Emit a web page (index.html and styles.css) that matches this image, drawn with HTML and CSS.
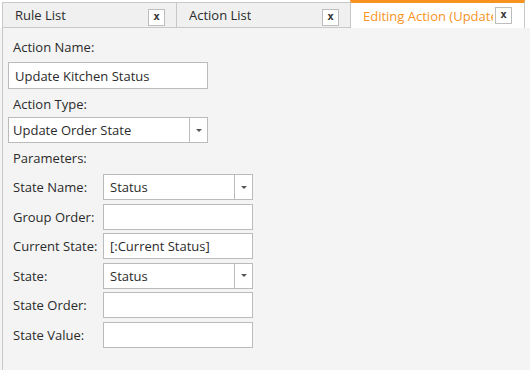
FILE: index.html
```html
<!DOCTYPE html>
<html>
<head>
<meta charset="utf-8">
<link rel="stylesheet" href="styles.css">
</head>
<body>
<div class="tabs">
  <div class="tab">
    <span class="tab-title">Rule List</span>
    <span class="close">x</span>
  </div>
  <div class="tab">
    <span class="tab-title">Action List</span>
    <span class="close">x</span>
  </div>
  <div class="tab active">
    <span class="tab-title">Editing Action (Update Kitchen Status)</span>
    <span class="close">x</span>
  </div>
</div>
<div class="panel">
  <div class="label top">Action Name:</div>
  <div class="field wide name">Update Kitchen Status</div>
  <div class="label">Action Type:</div>
  <div class="field wide select type"><span class="val">Update Order State</span><span class="drop"><i></i></span></div>
  <div class="label params">Parameters:</div>
  <div class="rows">
    <div class="row"><span class="rlabel">State Name:</span><div class="field small select"><span class="val">Status</span><span class="drop"><i></i></span></div></div>
    <div class="row"><span class="rlabel">Group Order:</span><div class="field small"></div></div>
    <div class="row"><span class="rlabel">Current State:</span><div class="field small">[:Current Status]</div></div>
    <div class="row"><span class="rlabel">State:</span><div class="field small select"><span class="val">Status</span><span class="drop"><i></i></span></div></div>
    <div class="row"><span class="rlabel">State Order:</span><div class="field small"></div></div>
    <div class="row"><span class="rlabel">State Value:</span><div class="field small"></div></div>
  </div>
</div>
</body>
</html>
```
FILE: styles.css
```css
* { box-sizing: border-box; }
html, body { margin: 0; height: 100%; }
body {
  background: #f4f4f4;
  font-family: "Open Sans", "Noto Sans", sans-serif;
  font-size: 13px;
  color: #2b2b2b;
  display: flex;
  flex-direction: column;
}
.tabs {
  display: flex;
  height: 28px;
  padding-left: 2px;
  background: #fff;
}
.tab {
  width: 174px;
  margin-top: 2px;
  height: 26px;
  background: #f0f0f0;
  border-top: 1px solid #c8c8c8;
  border-left: 1px solid #c8c8c8;
  border-bottom: 1px solid #c8c8c8;
  display: flex;
  align-items: center;
  padding-left: 12px;
  position: relative;
  font-size: 13px;
  color: #2b2b2b;
}
.tab-title { white-space: nowrap; overflow: hidden; }
.tab .close {
  position: absolute;
  right: 11px;
  top: 6px;
  width: 17px;
  height: 17px;
  border: 1px solid #bdbdbd;
  background: #fff;
  font-family: "DejaVu Sans Mono", monospace;
  font-weight: bold;
  font-size: 11px;
  line-height: 14px;
  text-align: center;
  color: #333;
}
.tab.active {
  margin-top: 0;
  height: 28px;
  width: 175px;
  background: #fff;
  border-top: 3px solid #f7931e;
  border-bottom: none;
  border-right: 1px solid #c8c8c8;
  color: #f7931e;
}
.tab.active .tab-title { width: 130px; }
.tab.active .close { top: 4px; right: 12px; }
.panel {
  flex: 1;
  border-left: 1px solid #c8c8c8;
  margin-left: 2px;
  padding: 10px 0 0 5px;
  display: flex;
  flex-direction: column;
  align-items: flex-start;
}
.label {
  height: 18px;
  line-height: 18px;
  margin-left: 5px;
}
.field {
  background: #fff;
  border: 1px solid #bbb;
  display: flex;
  align-items: center;
  padding-left: 6px;
  white-space: nowrap;
}
.wide { width: 200px; }
.name { height: 27px; margin-top: 6px; margin-bottom: 6px; padding-left: 6px; }
.type { height: 26px; margin-top: 4px; margin-bottom: 6px; padding-left: 4px; }
.select { padding-right: 0; }
.select .val { flex: 1; }
.drop {
  width: 18px;
  height: 100%;
  border-left: 1px solid #bbb;
  display: flex;
  align-items: center;
  justify-content: center;
}
.drop i {
  width: 0; height: 0;
  border-left: 3px solid transparent;
  border-right: 3px solid transparent;
  border-top: 3px solid #555;
}
.rows {
  margin-top: 7px;
  display: flex;
  flex-direction: column;
  gap: 3.6px;
}
.row { display: flex; align-items: center; }
.rlabel { width: 90px; margin-left: 5px; }
.small { width: 150px; height: 26px; }
```
